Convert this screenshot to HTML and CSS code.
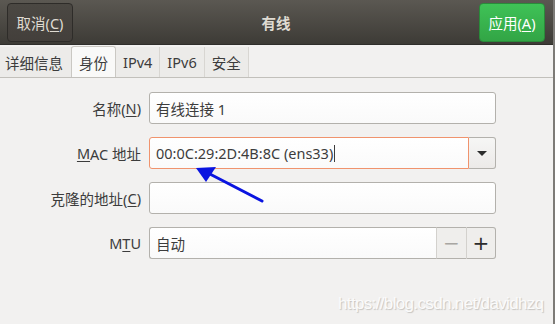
FILE: index.html
```html
<!DOCTYPE html>
<html lang="zh">
<head>
    <meta charset="UTF-8">
    <title>有线</title>
    <link rel="stylesheet" href="styles.css">
</head>
<body>
    <div class="window">
        <!-- 标题栏 -->
        <header class="headerbar">
            <button class="btn cancel">取消(<u>C</u>)</button>
            <div class="title">有线</div>
            <button class="btn apply">应用(<u>A</u>)</button>
        </header>

        <!-- 标签页 -->
        <nav class="tabs">
            <div class="tab first">详细信息</div>
            <div class="tab active">身份</div>
            <div class="tab">IPv4</div>
            <div class="tab">IPv6</div>
            <div class="tab">安全</div>
        </nav>

        <!-- 表单 -->
        <main class="form">
            <label class="label">名称(<u>N</u>)</label>
            <div class="entry">有线连接 1</div>

            <label class="label"><u>M</u>AC 地址</label>
            <div class="combo">
                <div class="entry focus">00:0C:29:2D:4B:8C (ens33)<span class="caret"></span></div>
                <div class="combo-btn"><span class="triangle"></span></div>
            </div>

            <label class="label">克隆的地址(<u>C</u>)</label>
            <div class="entry"></div>

            <label class="label">M<u>T</u>U</label>
            <div class="spin">
                <div class="entry">自动</div>
                <div class="spin-btn minus">&minus;</div>
                <div class="spin-btn plus">+</div>
            </div>
        </main>

        <svg class="arrow" width="80" height="45" viewBox="0 0 80 45">
            <line x1="76" y1="43" x2="20" y2="14" stroke="#0a14e0" stroke-width="3" stroke-linecap="round"/>
            <polygon points="10,10 30,9 20,24" fill="#0a14e0"/>
        </svg>

        <div class="watermark">https://blog.csdn.net/davidhzq</div>
    </div>
</body>
</html>
```

FILE: styles.css
```css
body {
    margin: 0;
    padding: 0;
    background-color: #f2f1f0;
    font-family: "Noto Sans", "Noto Sans CJK SC", sans-serif;
}
.window {
    position: relative;
    width: 553px;
    height: 324px;
    background-color: #f2f1f0;
    border-right: 2px solid #7d7b77;
    overflow: hidden;
    color: #3c3c3c;
}

/* 标题栏 */
.headerbar {
    display: flex;
    align-items: center;
    justify-content: space-between;
    height: 45px;
    box-sizing: border-box;
    padding: 3px 8px 3px 7px;
    background: linear-gradient(#5b5852, #3d3b36);
    border-bottom: 1px solid #2f2e2b;
}
.btn {
    width: 66px;
    height: 39px;
    border-radius: 4px;
    font-family: inherit;
    font-size: 14.5px;
    padding: 0;
}
.btn u {
    text-decoration-thickness: 1px;
    text-underline-offset: 2px;
}
.cancel {
    background: linear-gradient(#4b4843, #433f3b);
    border: 1px solid #2e2c29;
    color: #dfdbd2;
}
.apply {
    background: linear-gradient(#3fc257, #32a545);
    border: 1px solid #2a8a3a;
    color: #ffffff;
}
.title {
    color: #dfdbd2;
    font-size: 14.5px;
    font-weight: bold;
}

/* 标签页 */
.tabs {
    display: flex;
    height: 33px;
    border-bottom: 1px solid #c2c0bb;
    box-sizing: border-box;
}
.tab {
    display: flex;
    align-items: center;
    padding: 0 7px;
    font-size: 14.5px;
    color: #3c3c3c;
    background-color: #ecebe9;
    border-right: 1px solid #d8d6d2;
    margin-top: 2px;
}
.tab.first {
    padding-left: 5px;
    padding-right: 8px;
}
.tab.active {
    background-color: #f9f9f8;
    border: 1px solid #cac8c3;
    border-bottom: none;
    border-radius: 3px 3px 0 0;
    margin-top: 1px;
    margin-left: -1px;
}

/* 表单 */
.form {
    display: grid;
    grid-template-columns: 141px 347px;
    grid-auto-rows: 32px;
    column-gap: 8px;
    row-gap: 13px;
    padding-top: 14px;
}
.label {
    display: flex;
    align-items: center;
    justify-content: flex-end;
    font-size: 14.5px;
    color: #3c3c3c;
}
.label u {
    text-decoration-thickness: 1px;
    text-underline-offset: 2px;
}
.entry {
    display: flex;
    align-items: center;
    box-sizing: border-box;
    height: 32px;
    padding-left: 6px;
    border: 1px solid #b3b1ac;
    border-radius: 3px;
    background: linear-gradient(#ffffff, #fafafa);
    font-size: 14.5px;
    color: #3c3c3c;
}
.entry.focus {
    border-color: #f0936d;
}
.caret {
    display: inline-block;
    width: 1px;
    height: 17px;
    background-color: #3c3c3c;
    margin-left: 1px;
}
.combo, .spin {
    display: flex;
}
.combo .entry {
    flex: 1;
    border-radius: 3px 0 0 3px;
}
.combo-btn {
    width: 27px;
    box-sizing: border-box;
    display: flex;
    align-items: center;
    justify-content: center;
    border: 1px solid #b3b1ac;
    border-left: none;
    border-radius: 0 3px 3px 0;
    background: linear-gradient(#f6f6f5, #eceae8);
}
.triangle {
    width: 0;
    height: 0;
    border-left: 5px solid transparent;
    border-right: 5px solid transparent;
    border-top: 5px solid #2c2c2c;
}
.spin .entry {
    flex: 1;
    border-radius: 3px 0 0 3px;
    border-right: none;
}
.spin-btn {
    width: 30px;
    box-sizing: border-box;
    display: flex;
    align-items: center;
    justify-content: center;
    border: 1px solid #b3b1ac;
    border-left: 1px solid #d3d1cd;
    background-color: #efeeec;
    font-family: "DejaVu Sans", sans-serif;
    font-size: 20px;
}
.spin-btn.minus {
    color: #a8a6a2;
    border-right: none;
}
.spin-btn.plus {
    color: #2c2c2c;
    border-radius: 0 3px 3px 0;
}

/* 覆盖在内容上的箭头和水印 */
.arrow {
    position: absolute;
    left: 186px;
    top: 158px;
}
.watermark {
    position: absolute;
    left: 338px;
    top: 294px;
    font-family: "Liberation Sans", Arial, sans-serif;
    font-size: 17px;
    letter-spacing: -0.65px;
    color: #fbfbfb;
    text-shadow: 1px 1px 1px #c6c4c0;
}
```
